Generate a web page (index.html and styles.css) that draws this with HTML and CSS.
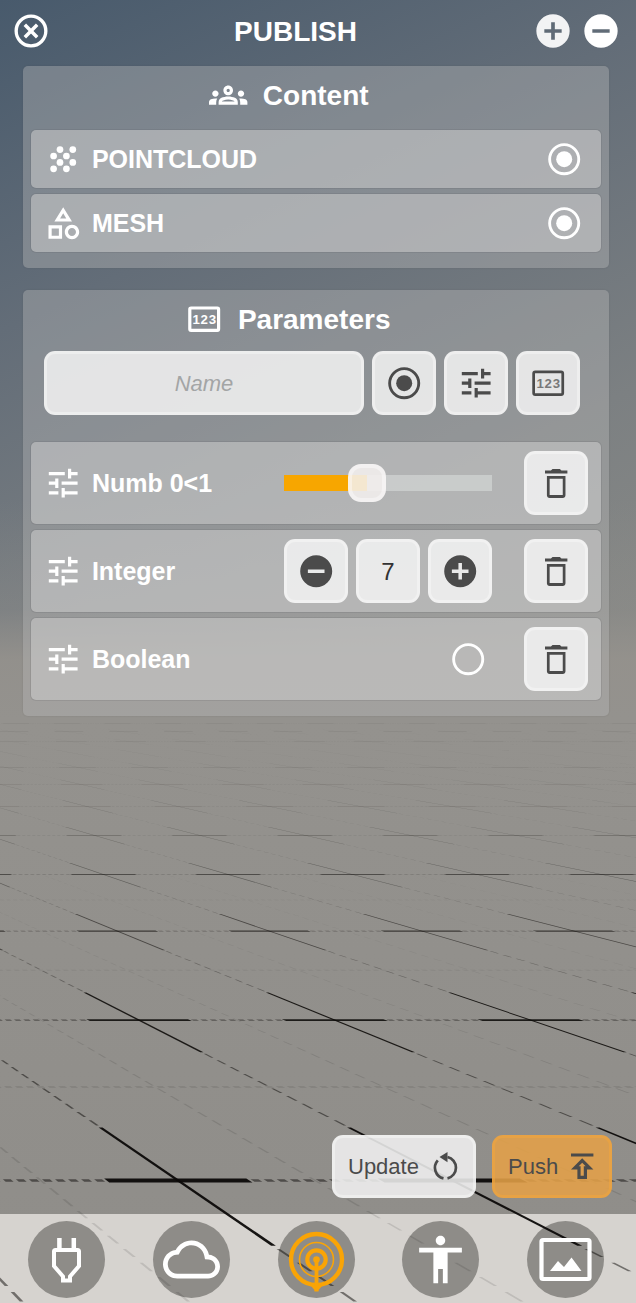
FILE: index.html
```html
<!DOCTYPE html>
<html lang="en">
<head>
<meta charset="utf-8">
<title>Publish</title>
<link rel="stylesheet" href="styles.css">
</head>
<body>
<svg class="defs" width="0" height="0" aria-hidden="true">
  <symbol id="tune" viewBox="0 0 24 24"><path d="M3 17v2h6v-2H3zM3 5v2h10V5H3zm10 16v-2h8v-2h-8v-2h-2v6h2zM7 9v2H3v2h4v2h2V9H7zm14 4v-2H11v2h10zm-6-4h2V7h4V5h-4V3h-2v6z"/></symbol>
  <symbol id="radio-on" viewBox="0 0 24 24"><circle cx="12" cy="12" r="9.1" fill="none" stroke="currentColor" stroke-width="1.8"/><circle cx="12" cy="12" r="5"/></symbol>
  <symbol id="radio-off" viewBox="0 0 24 24"><circle cx="12" cy="12" r="9.1" fill="none" stroke="currentColor" stroke-width="1.8"/></symbol>
  <symbol id="trash" viewBox="0 0 24 24"><path d="M6.200 19.500c0 1 .7 1.700 1.700 1.700h8.200c1 0 1.700-.7 1.700-1.700V7.500H6.200zM7.900 9.200h8.200v10.200H7.900zM15.300 4l-1-.8H9.700l-1 .8H5v2h14V4z"/></symbol>
  <symbol id="plus" viewBox="0 0 24 24"><path fill-rule="evenodd" d="M12 2a10 10 0 1 0 0 20 10 10 0 0 0 0-20zm5.200 11.100h-4.100v4.100h-2.200v-4.100H6.800v-2.200h4.100V6.800h2.200v4.100h4.100z"/></symbol>
  <symbol id="minus" viewBox="0 0 24 24"><path fill-rule="evenodd" d="M12 2a10 10 0 1 0 0 20 10 10 0 0 0 0-20zm5.200 11.100H6.800v-2.200h10.400z"/></symbol>
</svg>

<svg class="floor" id="floor" viewBox="0 0 636 1303" aria-hidden="true"></svg>

<div class="app">
  <header class="header">
    <svg class="icon-lg" viewBox="0 0 24 24"><circle cx="12" cy="12" r="8.900" fill="none" stroke="currentColor" stroke-width="2"/><path d="M8.300 8.300l7.400 7.400M15.700 8.300l-7.400 7.400" stroke="currentColor" stroke-width="2.100"/></svg>
    <h1 class="title">PUBLISH</h1>
    <div class="header-actions">
      <svg class="icon-lg dim"><use href="#plus"/></svg>
      <svg class="icon-lg"><use href="#minus"/></svg>
    </div>
  </header>

  <section class="panel">
    <h2 class="heading">
      <svg class="icon" viewBox="0 0 24 24"><path d="M4 13c1.1 0 2-.9 2-2s-.9-2-2-2-2 .9-2 2 .9 2 2 2zm1.13 1.1c-.37-.06-.74-.1-1.13-.1-.99 0-1.93.21-2.78.58C.48 14.9 0 15.62 0 16.43V18h4.5v-1.61c0-.83.23-1.61.63-2.29zM20 13c1.1 0 2-.9 2-2s-.9-2-2-2-2 .9-2 2 .9 2 2 2zm4 3.43c0-.81-.48-1.53-1.22-1.85-.85-.37-1.79-.58-2.78-.58-.39 0-.76.04-1.13.1.4.68.63 1.46.63 2.29V18H24v-1.57zM16.24 13.65c-1.17-.52-2.61-.9-4.24-.9s-3.07.39-4.24.9C6.68 14.13 6 15.21 6 16.39V18h12v-1.61c0-1.18-.68-2.26-1.76-2.74zM8.07 16c.09-.23.13-.39.91-.69.97-.38 1.99-.56 3.02-.56s2.05.18 3.02.56c.77.3.81.46.91.69H8.07zM12 8c.55 0 1 .45 1 1s-.45 1-1 1-1-.45-1-1 .45-1 1-1m0-2c-1.66 0-3 1.34-3 3s1.34 3 3 3 3-1.34 3-3-1.34-3-3-3z"/></svg>
      <span>Content</span>
    </h2>
    <div class="rows">
      <div class="row">
        <svg class="icon" viewBox="0 0 24 24"><circle cx="10" cy="6" r="2.1"/><circle cx="18" cy="6" r="2.1"/><circle cx="6" cy="10" r="2.1"/><circle cx="14" cy="10" r="2.1"/><circle cx="10" cy="14" r="2.1"/><circle cx="18" cy="14" r="2.1"/><circle cx="6" cy="18" r="2.1"/><circle cx="14" cy="18" r="2.1"/></svg>
        <span class="label">POINTCLOUD</span>
        <svg class="icon toggle"><use href="#radio-on"/></svg>
      </div>
      <div class="row">
        <svg class="icon" viewBox="0 0 24 24"><path d="M12 2l-5.5 9h11L12 2zm0 3.84L13.93 9h-3.87L12 5.84zM17.5 13c-2.49 0-4.5 2.01-4.5 4.5s2.01 4.5 4.5 4.5 4.5-2.01 4.5-4.5-2.01-4.5-4.5-4.5zm0 7c-1.38 0-2.5-1.12-2.5-2.5s1.12-2.5 2.5-2.5 2.5 1.12 2.5 2.5-1.12 2.5-2.5 2.5zM2.800 21.800h8.500v-8.500H2.800v8.500zm2-6.500h4.500v4.500H4.800v-4.500z"/></svg>
        <span class="label">MESH</span>
        <svg class="icon toggle"><use href="#radio-on"/></svg>
      </div>
    </div>
  </section>

  <section class="panel">
    <h2 class="heading params">
      <svg class="icon" viewBox="0 0 24 24"><rect x="3" y="5" width="18" height="14" rx=".8" fill="none" stroke="currentColor" stroke-width="2"/><text x="12.300" y="15" text-anchor="middle" class="digits">123</text></svg>
      <span>Parameters</span>
    </h2>
    <div class="add">
      <div class="field">Name</div>
      <div class="btn"><svg class="icon"><use href="#radio-on"/></svg></div>
      <div class="btn"><svg class="icon"><use href="#tune"/></svg></div>
      <div class="btn"><svg class="icon" viewBox="0 0 24 24"><rect x="2.900" y="4.900" width="18.200" height="14.200" rx="1" fill="none" stroke="currentColor" stroke-width="1.700"/><text x="12.300" y="15" text-anchor="middle" class="digits soft">123</text></svg></div>
    </div>
    <div class="rows">
      <div class="row tall">
        <svg class="icon"><use href="#tune"/></svg>
        <span class="label">Numb 0&lt;1</span>
        <div class="control"><div class="slider"><div class="fill"></div><div class="thumb"></div></div></div>
        <div class="btn"><svg class="icon"><use href="#trash"/></svg></div>
      </div>
      <div class="row tall">
        <svg class="icon"><use href="#tune"/></svg>
        <span class="label">Integer</span>
        <div class="control">
          <div class="btn"><svg class="icon"><use href="#minus"/></svg></div>
          <div class="btn value">7</div>
          <div class="btn"><svg class="icon"><use href="#plus"/></svg></div>
        </div>
        <div class="btn"><svg class="icon"><use href="#trash"/></svg></div>
      </div>
      <div class="row tall">
        <svg class="icon"><use href="#tune"/></svg>
        <span class="label">Boolean</span>
        <div class="control end"><svg class="icon"><use href="#radio-off"/></svg></div>
        <div class="btn"><svg class="icon"><use href="#trash"/></svg></div>
      </div>
    </div>
  </section>

  <div class="actions">
    <div class="btn action update"><span>Update</span>
      <svg class="icon" viewBox="0 0 38.4 38.4"><g fill="none" stroke="currentColor" stroke-width="2.700"><path d="M20.500 10A11 11 0 0 1 20.500 31.400"/><path d="M16.500 31.400A11 11 0 0 1 10.800 13.300"/></g><path d="M12.500 10l8-5v10.200z"/></svg>
    </div>
    <div class="btn action push"><span>Push</span>
      <svg class="icon" viewBox="0 0 24 24"><path d="M5 4h14v2H5zm0 10h4v6h6v-6h4l-7-7-7 7zm8-2v6h-2v-6H9.830L12 9.830 14.170 12H13z"/></svg>
    </div>
  </div>

  <nav class="nav">
    <div class="tab"><svg viewBox="0 0 77 77"><path d="M31.400 17v12M45.800 17v12" fill="none" stroke="currentColor" stroke-width="4.500"/><path d="M27.500 29h22q1.500 0 1.500 1.500V45l-9 10.500v4H35v-4L26 45V30.500q0-1.500 1.500-1.500z" fill="none" stroke="currentColor" stroke-width="4"/></svg></div>
    <div class="tab"><svg class="glyph" viewBox="0 0 24 24"><path d="M12 6c2.620 0 4.880 1.860 5.390 4.430l.3 1.500 1.530.11c1.560.1 2.780 1.410 2.780 2.960 0 1.650-1.350 3-3 3H6c-2.210 0-4-1.790-4-4 0-2.050 1.530-3.760 3.560-3.970l1.070-.11.5-.95C8.080 7.140 9.940 6 12 6m0-2C9.110 4 6.600 5.640 5.350 8.040 2.340 8.360 0 10.910 0 14c0 3.310 2.690 6 6 6h13c2.760 0 5-2.240 5-5 0-2.640-2.050-4.780-4.650-4.960C18.670 6.590 15.640 4 12 4z"/></svg></div>
    <div class="tab active"><svg viewBox="0 0 77 77"><g fill="none" stroke="currentColor"><circle cx="38.500" cy="38.500" r="25.500" stroke-width="4.400"/><circle cx="38.500" cy="38.500" r="17" stroke-width="1.600"/><circle cx="38.500" cy="38.500" r="9.200" stroke-width="4.200"/><path d="M38.500 38v32" stroke-width="3.800"/></g><circle cx="38.500" cy="38.500" r="3.300"/><path d="M33 65h11l-3.500 4v1.500h-4V69z"/></svg></div>
    <div class="tab"><svg class="glyph" viewBox="0 0 24 24"><path d="M12 2c1.100 0 2 .9 2 2s-.9 2-2 2-2-.9-2-2 .9-2 2-2zm9 7h-6v13h-2v-6h-2v6H9V9H3V7h18v2z"/></svg></div>
    <div class="tab"><svg viewBox="0 0 77 77"><rect x="14.500" y="19" width="48" height="39" rx="1.500" fill="none" stroke="currentColor" stroke-width="4.200"/><path d="M23 50l8-10 6 6 7.500-9.500L54.500 50z"/></svg></div>
  </nav>
</div>
<script src="floor.js"></script>
</body>
</html>
```

FILE: styles.css
```css
* { box-sizing: border-box; }

html {
  background:
    linear-gradient(180deg, rgba(146,144,140,0) 500px, rgba(146,144,140,0.3) 610px, rgba(149,146,141,0.9) 660px, rgb(148,146,142) 720px, rgb(143,141,137) 1303px),
    linear-gradient(155deg, rgb(72,90,108) 0, rgb(99,109,120) 300px, rgb(124,128,130) 620px, rgb(136,137,134) 860px);
  min-height: 100%;
}

body {
  margin: 0;
  font-family: "Liberation Sans", Arial, sans-serif;
  color: #fff;
}

svg { display: block; fill: currentColor; }
.defs { position: absolute; }

/* The floor grid is drawn over the nav background but under its icons. */
.floor {
  position: absolute;
  top: 0;
  left: 0;
  width: 636px;
  height: 1303px;
  z-index: -1;
}

.app {
  width: 636px;
  height: 1303px;
  display: flex;
  flex-direction: column;
}

.icon { width: 38.4px; height: 38.4px; flex: none; }
.icon-lg { width: 40px; height: 40px; flex: none; }
.dim { opacity: 0.92; }
.digits { font: bold 8.300px "Liberation Sans", Arial, sans-serif; letter-spacing: 0.500px; }
.soft { opacity: 0.7; }

.header {
  height: 66px;
  flex: none;
  padding: 11px 15.500px 0 11px;
  display: flex;
  align-items: flex-start;
}
.title {
  flex: 1;
  margin: 0;
  padding-left: 7.500px;
  font-size: 28px;
  line-height: 41px;
  text-align: center;
}
.header-actions { display: flex; gap: 8px; }

.panel {
  margin: 0 27px 22px 23px;
  padding: 0 7px 15px;
  background: rgba(185, 185, 185, 0.39);
  border-radius: 5px;
  box-shadow: 0 0 1px 1px rgba(60, 60, 60, 0.05);
}
.heading {
  margin: 0;
  height: 63px;
  padding: 0 54px 4px 0;
  display: flex;
  align-items: center;
  justify-content: center;
  gap: 15px;
  font-size: 28px;
}
.heading.params { padding-right: 57px; }

.rows { display: flex; flex-direction: column; gap: 4px; }
.row {
  height: 60px;
  padding: 0 13px;
  display: flex;
  align-items: center;
  background: rgba(206, 206, 206, 0.54) padding-box;
  border: 1px solid rgba(80, 80, 85, 0.14);
  border-radius: 6px;
}
.row.tall { height: 84px; }
.label {
  flex: 1;
  padding-left: 9.500px;
  font-size: 25px;
  font-weight: bold;
}
.toggle { margin-right: 5px; }

.add {
  display: flex;
  gap: 8px;
  padding: 0 22px 0 14px;
  margin: -2px 0 26px;
}
.field, .btn {
  height: 64px;
  display: flex;
  align-items: center;
  justify-content: center;
  background: rgba(241, 241, 241, 0.87);
  border: 3px solid rgba(255, 255, 255, 0.36);
  border-radius: 11px;
  color: #4b4b4b;
}
.field {
  flex: 1;
  padding-top: 2px;
  font-size: 22px;
  font-style: italic;
  color: #a3a5a5;
}
.btn { width: 64px; flex: none; }
.value { padding-top: 2px; font-size: 24px; color: #333; }

.control {
  width: 208px;
  margin-right: 32px;
  display: flex;
  align-items: center;
  gap: 8px;
}
.control.end { justify-content: flex-end; padding-right: 5px; }
.slider {
  flex: 1;
  height: 16px;
  display: flex;
  align-items: center;
  background: rgba(224, 228, 226, 0.5);
}
.fill { width: 83px; height: 16px; background: #f7a600; }
.thumb {
  width: 38px;
  height: 38px;
  margin-left: -19px;
  background: rgba(243, 240, 239, 0.87);
  border: 4px solid rgba(255, 255, 255, 0.4);
  border-radius: 13px;
}

.actions {
  margin-top: auto;
  padding: 0 24px 16px 0;
  display: flex;
  justify-content: flex-end;
  gap: 16px;
}
.action {
  justify-content: space-between;
  height: 63px;
  font-size: 22px;
}
.update { width: 144px; padding: 0 8px 0 13px; }
.push {
  width: 120px;
  padding: 0 8px 0 13px;
  background: rgba(228, 160, 72, 0.88);
  border-color: rgba(243, 166, 60, 0.55);
}

.nav {
  position: relative;
  height: 89px;
  flex: none;
  padding: 7px 32px 0 28px;
  display: flex;
  justify-content: space-between;
}
.nav::before {
  content: "";
  position: absolute;
  inset: 0;
  background: rgb(214, 211, 207);
  z-index: -3;
}
.tab {
  position: relative;
  width: 77px;
  height: 77px;
  display: flex;
  align-items: center;
  justify-content: center;
}
.tab::before {
  content: "";
  position: absolute;
  inset: 0;
  border-radius: 50%;
  background: rgb(142, 140, 136);
  z-index: -2;
}
.tab svg { width: 77px; height: 77px; }
.tab .glyph { width: 57px; height: 57px; }
.active { color: #f9a406; }
```

FILE: floor.js
```
// Perspective floor: rows sit at constant depth, columns meet at the vanishing point.
(function () {
  var HORIZON = 620, VX = -643, DEPTH0 = 0.0017841, DEPTH = 0.000715;
  var COL0 = 1.4648, COL = 0.4895, PERIOD = 1 / 21;
  var parts = [];

  function point(c, r) {
    var d = 1 / (DEPTH0 + DEPTH * r);
    return [VX + (COL0 + COL * c) * d, HORIZON + d];
  }

  function quad(c1, r1, c2, r2, half, alpha) {
    var isRow = r1 === r2;
    var p = isRow
      ? [point(c1, r1 - half), point(c2, r1 - half), point(c2, r1 + half), point(c1, r1 + half)]
      : [point(c1 - half, r1), point(c1 + half, r1), point(c1 + half, r2), point(c1 - half, r2)];
    var xs = p.map(function (q) { return q[0]; });
    if (Math.max.apply(null, xs) < 0 || Math.min.apply(null, xs) > 636 || p[2][1] > 1400) return;
    // Lines dissolve towards the horizon, the receding ones sooner.
    var depth = p[0][1] - HORIZON;
    var fade = Math.min(1, Math.pow(depth / (isRow ? 430 : 450), isRow ? 1.2 : 1.8));
    var a = (alpha * fade).toFixed(3);
    if (a < 0.01) return;
    var d = p.map(function (q) { return q[0].toFixed(2) + " " + q[1].toFixed(2); }).join("L");
    parts.push('<path fill="#0c0a08" fill-opacity="' + a + '" d="M' + d + 'Z"/>');
  }

  function line(isRow, at, from, to, major) {
    function seg(a, b, half, alpha) {
      if (isRow) quad(a, at, b, at, half, alpha); else quad(at, a, at, b, half, alpha);
    }
    for (var n = from; n < to; n++) {
      if (major) seg(n - 0.26, n + 0.26, isRow ? 0.0085 : 0.0078, 0.95);
      for (var i = major ? 6 : 0; i <= (major ? 15 : 20); i++) {
        var m = n + i * PERIOD;
        seg(m - PERIOD * 0.3, m + PERIOD * 0.3, major ? 0.0055 : 0.005, major ? 0.5 : 0.11);
      }
    }
  }

  for (var k = 0; k <= 11; k++) {
    line(true, k, -4, 28, true);
    if (k < 3) line(true, k + 0.5, -4, 12, false);
  }
  for (var j = -2; j <= 26; j++) {
    line(false, j, -1, 11, true);
    if (j < 8) line(false, j + 0.5, -1, 3, false);
  }
  document.getElementById("floor").innerHTML = parts.join("");
})();
```
